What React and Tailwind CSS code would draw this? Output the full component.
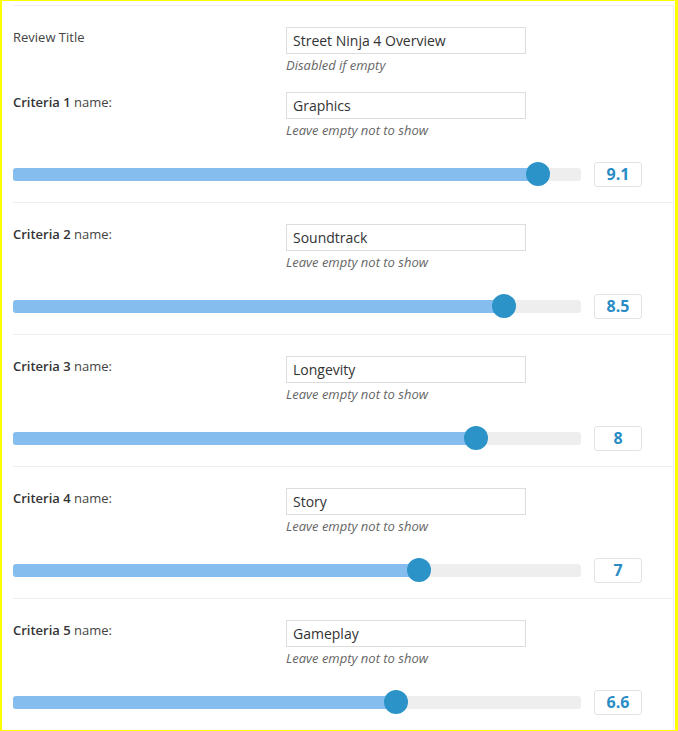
const criteria = [
  { n: 1, name: "Graphics", score: 9.1 },
  { n: 2, name: "Soundtrack", score: 8.5 },
  { n: 3, name: "Longevity", score: 8 },
  { n: 4, name: "Story", score: 7 },
  { n: 5, name: "Gameplay", score: 6.6 },
];

function Field({ label, value, help }) {
  return (
    <div className="grid grid-cols-[273px_1fr]">
      <div className="text-[13px] leading-[20px] text-[#444]">{label}</div>
      <div>
        <input
          readOnly
          value={value}
          className="block w-[240px] h-[27px] border border-[#ddd] bg-white px-[6px] text-[14px] text-[#333] outline-none"
        />
        <p className="mt-[2px] text-[13px] leading-[18px] italic text-[#666]">{help}</p>
      </div>
    </div>
  );
}

function Slider({ score }) {
  // knob centre in px from the track start
  const pos = 8.6 + score * 56.8;
  return (
    <div className="mt-[23px] flex items-center h-[24px]">
      <div className="relative w-[568px] h-[13px] rounded-[3px] bg-[#eeeeee]">
        <div className="h-full rounded-l-[3px] bg-[#85bdef]" style={{ width: pos }} />
        <div
          className="absolute top-1/2 -translate-y-1/2 w-[24px] h-[24px] rounded-full bg-[#2b93c7]"
          style={{ left: pos - 12 }}
        />
      </div>
      <div className="ml-[13px] w-[48px] h-[25px] flex items-center justify-center rounded-[3px] border border-[#e3e3e3] text-[16px] font-bold text-[#2a8cc5]">
        {score}
      </div>
    </div>
  );
}

export default function App() {
  return (
    <div
      className="w-[678px] h-[731px] bg-white border-t border-b border-l-2 border-r-[3px] border-[#ffff00] pl-[11px] pt-[4px] pr-[1px] overflow-hidden"
      style={{ fontFamily: '"Open Sans", "Liberation Sans", sans-serif' }}
    >
      <div className="border-t border-r border-[#eeeeee] divide-y divide-[#eeeeee]">
        {criteria.map((c) => (
          <section key={c.n} className="pt-[21px] pb-[16px]">
            {c.n === 1 && (
              <div className="mb-[18px]">
                <Field label="Review Title" value="Street Ninja 4 Overview" help="Disabled if empty" />
              </div>
            )}
            <Field
              label={
                <>
                  <span className="font-semibold text-[#333]">Criteria {c.n}</span> name:
                </>
              }
              value={c.name}
              help="Leave empty not to show"
            />
            <Slider score={c.score} />
          </section>
        ))}
      </div>
    </div>
  );
}
